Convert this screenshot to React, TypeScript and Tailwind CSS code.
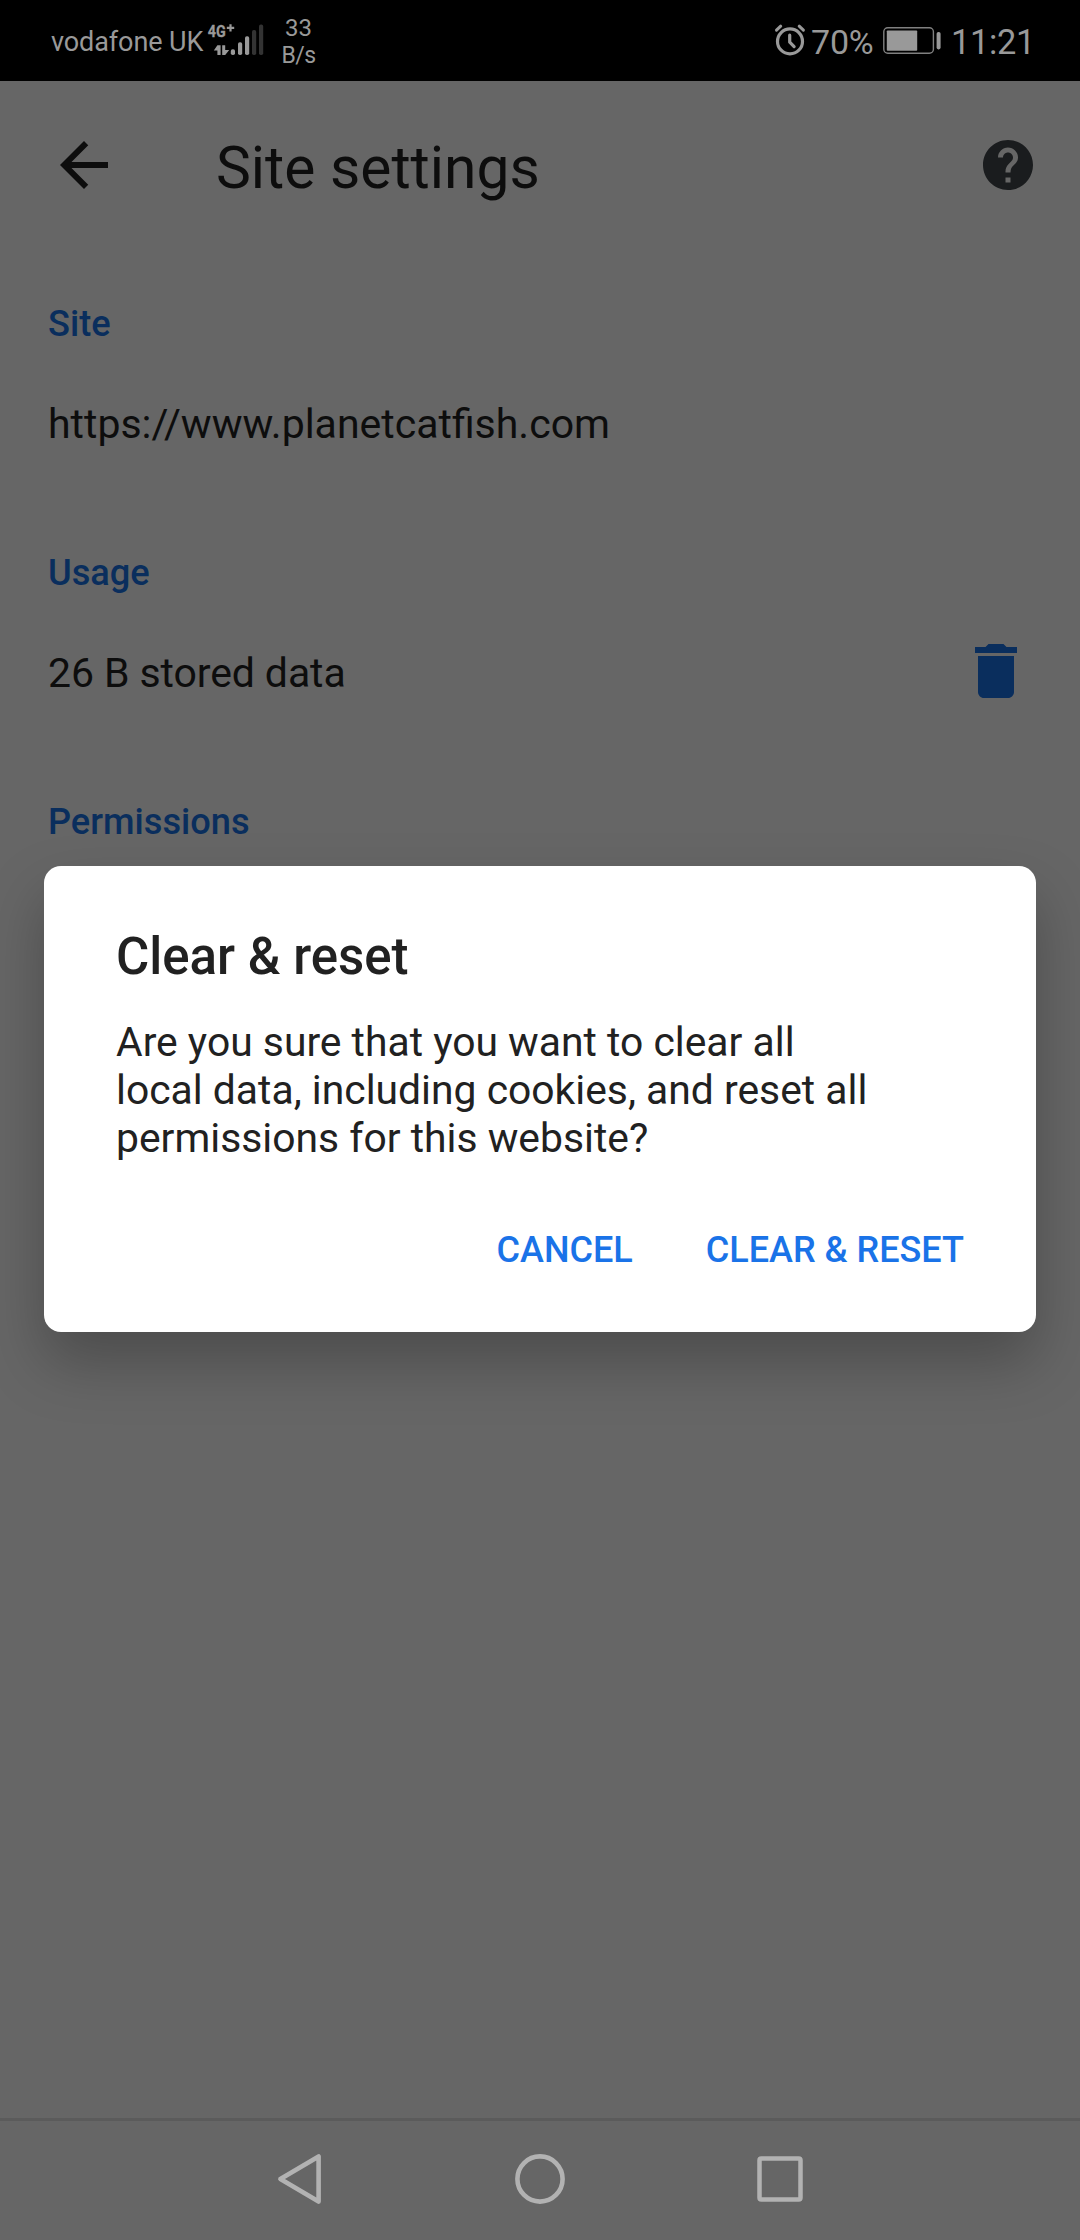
import React from "react";

function SignalIcon() {
  return (
    <svg width="58" height="81" viewBox="208 0 58 81" fill="#999999" className="shrink-0 overflow-visible">
      <text
        x="207.8"
        y="37"
        fontFamily="Roboto, sans-serif"
        fontSize="17"
        fontWeight="700"
        stroke="#999999"
        strokeWidth="0.3"
        textLength="18"
        lengthAdjust="spacingAndGlyphs"
      >
        4G
      </text>
      <path d="M229.4 24.2h2.2v2.6h2.6v2.1h-2.6v2.6h-2.2v-2.6h-2.6v-2.1h2.6z" />
      <path d="M217.4 45.3h3.2V55h-3.2v-4.6h-3.6z" />
      <path d="M222.2 45.3h3v4.7h4L225.2 55h-3z" />
      <rect x="230.8" y="49.3" width="4.2" height="5.8" rx="1.8" />
      <rect x="238" y="42.3" width="4.2" height="12.8" rx="1.8" />
      <rect x="245" y="36.2" width="4.2" height="18.9" rx="1.8" />
      <g fill="#333333">
        <rect x="252" y="30" width="4.2" height="25.1" rx="1.8" />
        <rect x="259" y="24.6" width="4.2" height="30.5" rx="1.8" />
      </g>
    </svg>
  );
}

function AlarmIcon() {
  return (
    <svg
      width="38"
      height="81"
      viewBox="772 0 38 81"
      fill="none"
      stroke="#999999"
      strokeWidth="3.2"
      strokeLinecap="round"
      strokeLinejoin="round"
      className="shrink-0"
    >
      <circle cx="790" cy="41.4" r="12.5" />
      <path d="M789.7 35.2v7l4.4 4.4" />
      <path d="M776.5 30.2l4.2-4M803.4 30.2l-4.2-4" strokeWidth="3" />
    </svg>
  );
}

function BatteryIcon() {
  return (
    <svg width="64" height="81" viewBox="880 0 64 81" fill="#999999" className="shrink-0">
      <rect x="883.8" y="27.7" width="49.6" height="25.6" rx="4" fill="none" stroke="#808080" strokeWidth="1.4" />
      <rect x="886.8" y="30.4" width="30.4" height="20.4" rx="0.8" />
      <rect x="936.6" y="32" width="4" height="17.4" rx="1.8" />
    </svg>
  );
}

function StatusBar() {
  return (
    <div className="flex h-[81px] shrink-0 items-center bg-black pl-[51px] text-[#999999]">
      <span className="w-[157px] pt-[2px] text-[27px] leading-[32px] tracking-[-0.1px]">vodafone UK</span>
      <SignalIcon />
      <div className="ml-[14px] flex w-[37px] flex-col items-center pt-[2px] leading-[27px]">
        <span className="text-[24px]">33</span>
        <span className="text-[23px] tracking-[-0.6px]">B/s</span>
      </div>
      <div className="ml-auto flex items-center">
        <AlarmIcon />
        <span className="ml-[1px] w-[69px] pt-[2px] text-[34px] leading-[40px] tracking-[-0.2px]">70%</span>
        <BatteryIcon />
        <span className="ml-[7px] w-[129px] pt-[2px] text-[34.4px] leading-[40px] tracking-[-0.3px]">11:21</span>
      </div>
    </div>
  );
}

function Header() {
  return (
    <header className="flex h-[168px] shrink-0 items-center pl-12 pr-[42px]">
      <svg width="72" height="72" viewBox="0 0 24 24" fill="#0d0d0d">
        <path d="M20 11H7.83l5.59-5.59L12 4l-8 8 8 8 1.41-1.41L7.83 13H20v-2z" />
      </svg>
      <h1 className="ml-24 pt-[6px] text-[58.7px] leading-[72px]">Site settings</h1>
      <svg width="60" height="60" viewBox="0 0 24 24" fill="#1a1c1e" className="ml-auto">
        <path d="M12 2C6.48 2 2 6.48 2 12s4.48 10 10 10 10-4.48 10-10S17.52 2 12 2zm1 17h-2v-2h2v2zm2.07-7.75l-.9.92C13.45 12.9 13 13.5 13 15h-2v-.5c0-1.1.45-2.1 1.17-2.83l1.24-1.26c.37-.36.59-.86.59-1.41 0-1.1-.9-2-2-2s-2 .9-2 2H8c0-2.21 1.79-4 4-4s4 1.79 4 4c0 .88-.36 1.68-.93 2.25z" />
      </svg>
    </header>
  );
}

function Section({ title, children }: { title: string; children?: React.ReactNode }) {
  return (
    <section className="h-[249px] shrink-0 px-12">
      <h2 className="text-[36.2px] font-medium leading-[150px] text-[#0a2e5d]">{title}</h2>
      {children && (
        <div className="flex h-[50px] items-center justify-between text-[41px] leading-[50px]">{children}</div>
      )}
    </section>
  );
}

function NavBar() {
  return (
    <nav className="mt-auto flex h-[122px] shrink-0 items-center justify-center border-t-[3px] border-[#5b5b5b] pb-[3px]">
      <div className="flex w-60 justify-center">
        <svg width="50" height="56" viewBox="0 0 50 56" fill="none" stroke="#b2b2b2" strokeWidth="4.6" strokeLinejoin="round">
          <path d="M43.6 5.4v45.2L5.4 28z" />
        </svg>
      </div>
      <div className="flex w-60 justify-center">
        <svg width="56" height="56" viewBox="0 0 56 56" fill="none" stroke="#b2b2b2" strokeWidth="4.6">
          <circle cx="28" cy="28" r="22.6" />
        </svg>
      </div>
      <div className="flex w-60 justify-center">
        <svg width="56" height="56" viewBox="0 0 56 56" fill="none" stroke="#b2b2b2" strokeWidth="4.5">
          <rect x="7.5" y="7.5" width="41" height="41" rx="1.8" />
        </svg>
      </div>
    </nav>
  );
}

function ConfirmDialog() {
  return (
    <div
      role="dialog"
      className="absolute left-[44px] top-[866px] h-[466px] w-[992px] rounded-[17px] bg-white pl-[72px] pr-[72px] pt-[61px] text-[#212121] shadow-[0_30px_60px_rgba(0,0,0,0.26)]"
    >
      <h2 className="text-[51px] font-medium leading-[60px]">Clear &amp; reset</h2>
      <p className="mt-[31px] text-[40.85px] leading-[48px]">
        Are you sure that you want to clear all
        <br />
        local data, including cookies, and reset all
        <br />
        permissions for this website?
      </p>
      <div className="mt-16 flex justify-end gap-[73px] text-[36px] font-medium leading-[48px] text-[#1a73e8]">
        <button>CANCEL</button>
        <button>CLEAR &amp; RESET</button>
      </div>
    </div>
  );
}

export default function App() {
  return (
    <div className="relative flex h-[2240px] w-[1080px] flex-col overflow-hidden bg-[#666666] font-['Roboto',sans-serif] text-[#0d0d0d]">
      <StatusBar />
      <Header />
      <Section title="Site">
        <span>https://www.planetcatfish.com</span>
      </Section>
      <Section title="Usage">
        <span className="tracking-[-0.1px]">26 B stored data</span>
        <svg width="72" height="72" viewBox="0 0 24 24" fill="#0a2e5d" className="-mt-1 shrink-0">
          <path d="M6 19c0 1.1.9 2 2 2h8c1.1 0 2-.9 2-2V7H6v12zM19 4h-3.5l-1-1h-5l-1 1H5v2h14V4z" />
        </svg>
      </Section>
      <Section title="Permissions" />
      <NavBar />
      <ConfirmDialog />
    </div>
  );
}
